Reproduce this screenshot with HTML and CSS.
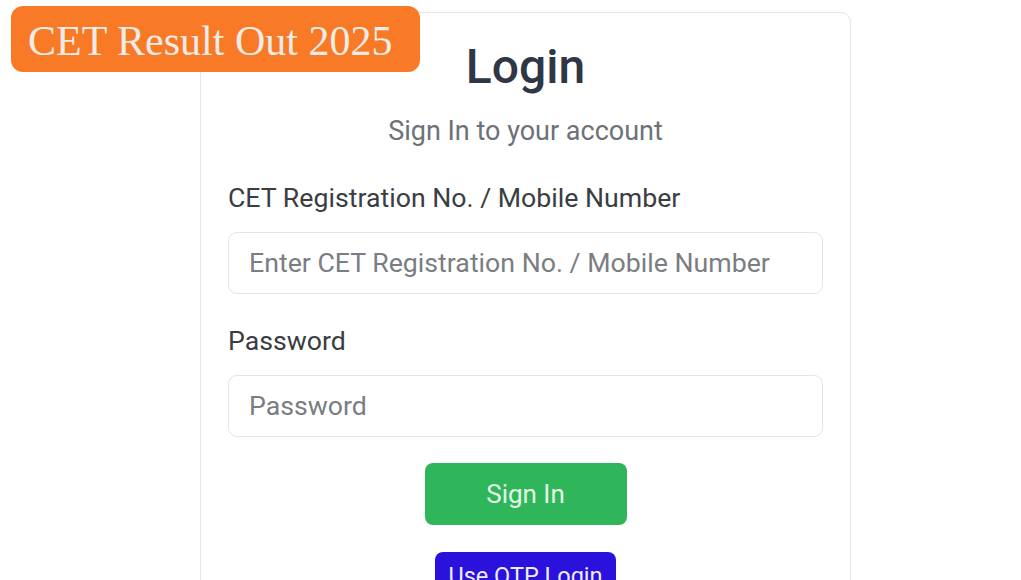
FILE: index.html
```html
<!DOCTYPE html>
<html lang="en">
<head>
<meta charset="utf-8">
<title>CET Login</title>
<link rel="stylesheet" href="styles.css">
</head>
<body>
<div class="page">
  <div class="badge">CET Result Out 2025</div>
  <div class="card">
    <h1 class="title">Login</h1>
    <p class="subtitle">Sign In to your account</p>
    <form class="form">
      <div class="field">
        <label class="label" for="reg">CET Registration No. / Mobile Number</label>
        <input class="input" id="reg" type="text" placeholder="Enter CET Registration No. / Mobile Number">
      </div>
      <div class="field">
        <label class="label" for="pw">Password</label>
        <input class="input" id="pw" type="password" placeholder="Password">
      </div>
      <div class="actions">
        <button class="btn btn-green" type="button">Sign In</button>
        <button class="btn btn-blue" type="button">Use OTP Login</button>
      </div>
    </form>
  </div>
</div>
</body>
</html>
```

FILE: styles.css
```css
* { box-sizing: border-box; }
html, body {
  margin: 0;
  padding: 0;
  background: #ffffff;
  height: 100%;
  overflow: hidden;
}
body {
  font-family: Roboto, "Noto Sans", Arial, sans-serif;
}
.page {
  position: relative;
  padding-top: 12px;
  padding-left: 200px;
}
.badge {
  position: absolute;
  left: 11px;
  top: 6px;
  width: 409px;
  height: 66px;
  background: #f87a26;
  border-radius: 12px;
  color: #ecebe6;
  font-family: "Liberation Serif", "DejaVu Serif", serif;
  font-size: 42px;
  line-height: 66px;
  padding-top: 2px;
  padding-left: 17px;
  white-space: nowrap;
  z-index: 2;
}
.card {
  width: 651px;
  min-height: 700px;
  border: 1.5px solid #e6e6e6;
  border-radius: 10px;
  padding: 26px 27px 0 27px;
  background: #ffffff;
}
.title {
  margin: 0;
  text-align: center;
  font-size: 48px;
  line-height: 56px;
  font-weight: 500;
  color: #2f3746;
}
.subtitle {
  margin: 20px 0 0 0;
  text-align: center;
  font-size: 27px;
  line-height: 32px;
  color: #6d7178;
}
.form {
  margin-top: 35px;
  display: flex;
  flex-direction: column;
}
.field {
  display: flex;
  flex-direction: column;
  margin-bottom: 31px;
}
.label {
  font-size: 26.7px;
  line-height: 32px;
  color: #3a3d42;
  margin-bottom: 18px;
}
.input {
  height: 62px;
  width: 100%;
  border: 1.5px solid #e4e4e4;
  border-radius: 9px;
  padding: 0 20px;
  font-family: Roboto, "Noto Sans", Arial, sans-serif;
  font-size: 26.7px;
  color: #3a3d42;
  background: #ffffff;
  outline: none;
}
.input::placeholder {
  color: #7a7d82;
}
.actions {
  display: flex;
  flex-direction: column;
  align-items: center;
  gap: 27px;
  margin-top: -5px;
}
.btn {
  font-family: Roboto, "Noto Sans", Arial, sans-serif;
  border: none;
  border-radius: 8px;
  font-size: 26px;
  white-space: nowrap;
  cursor: pointer;
}
.btn-green {
  width: 202px;
  height: 62px;
  background: #2fb65a;
  color: #e3f6e4;
}
.btn-blue {
  width: 181px;
  height: 56px;
  padding: 0 0 8px 0;
  font-size: 23.5px;
  background: #2a12dc;
  color: #eeeefc;
}
```
